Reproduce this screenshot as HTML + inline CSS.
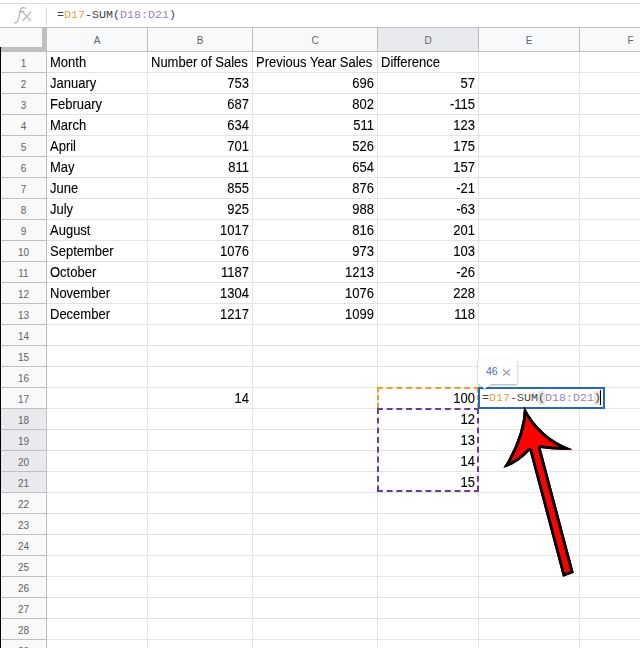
<!DOCTYPE html><html><head><meta charset="utf-8"><style>
*{margin:0;padding:0;box-sizing:border-box}
html,body{width:640px;height:648px;overflow:hidden;background:#fff}
body{position:relative;font-family:"Liberation Sans",sans-serif}
.a{position:absolute}
.hl{position:absolute;height:1px;background:#e2e3e3}
.vl{position:absolute;width:1px;background:#e2e3e3}
.t{position:absolute;font-size:13px;line-height:20px;color:#000;white-space:nowrap;transform:scaleY(1.08);transform-origin:0 14.5px;-webkit-text-stroke:0.1px #000}
.r{text-align:right}
.hd{position:absolute;font-size:10px;line-height:20px;color:#5f6368;text-align:center}
.mono{font-family:"Liberation Mono",monospace}
</style></head><body>

<div class="a" style="left:0;top:3px;width:640px;height:1px;background:#dadce0"></div>
<div class="a" style="left:46px;top:7px;width:1px;height:18px;background:#dadce0"></div>
<svg class="a" style="left:0;top:0" width="46" height="27"><g fill="none" stroke="#acacac" stroke-width="1.05" stroke-linecap="round"><path d="M14.5,22.5 C16.2,23.6 17.6,22.4 18.4,19.2 L20.6,10.4 C21.3,7.6 23.2,7 25.3,8.3"/><path d="M19.3,11.6 L24.2,11.6"/><path d="M22.6,12 L30.6,20.6 M31,11.6 L23,20.6"/></g></svg>
<div class="a mono" style="left:57px;top:7px;font-size:11.67px;line-height:16px;color:#3c4043;white-space:pre">=<span style="color:#e5a048">D17</span>-SUM(<span style="color:#9a84b4">D18:D21</span>)</div>
<div class="a" style="left:0;top:27px;width:640px;height:1px;background:#c0c0c0"></div>
<div class="a" style="left:0;top:28px;width:640px;height:23px;background:#f8f9fa"></div>
<div class="a" style="left:378px;top:28px;width:100px;height:23px;background:#e8eaed"></div>
<div class="a" style="left:0;top:51px;width:640px;height:1px;background:#c0c0c0"></div>
<div class="a" style="left:0;top:52px;width:46px;height:596px;background:#f8f9fa"></div>
<div class="a" style="left:0;top:409px;width:46px;height:83px;background:#e8eaed"></div>
<div class="hl" style="left:47px;top:72px;width:593px"></div>
<div class="a" style="left:0;top:72px;width:46px;height:1px;background:#c0c0c0"></div>
<div class="hl" style="left:47px;top:93px;width:593px"></div>
<div class="a" style="left:0;top:93px;width:46px;height:1px;background:#c0c0c0"></div>
<div class="hl" style="left:47px;top:114px;width:593px"></div>
<div class="a" style="left:0;top:114px;width:46px;height:1px;background:#c0c0c0"></div>
<div class="hl" style="left:47px;top:135px;width:593px"></div>
<div class="a" style="left:0;top:135px;width:46px;height:1px;background:#c0c0c0"></div>
<div class="hl" style="left:47px;top:156px;width:593px"></div>
<div class="a" style="left:0;top:156px;width:46px;height:1px;background:#c0c0c0"></div>
<div class="hl" style="left:47px;top:177px;width:593px"></div>
<div class="a" style="left:0;top:177px;width:46px;height:1px;background:#c0c0c0"></div>
<div class="hl" style="left:47px;top:198px;width:593px"></div>
<div class="a" style="left:0;top:198px;width:46px;height:1px;background:#c0c0c0"></div>
<div class="hl" style="left:47px;top:219px;width:593px"></div>
<div class="a" style="left:0;top:219px;width:46px;height:1px;background:#c0c0c0"></div>
<div class="hl" style="left:47px;top:240px;width:593px"></div>
<div class="a" style="left:0;top:240px;width:46px;height:1px;background:#c0c0c0"></div>
<div class="hl" style="left:47px;top:261px;width:593px"></div>
<div class="a" style="left:0;top:261px;width:46px;height:1px;background:#c0c0c0"></div>
<div class="hl" style="left:47px;top:282px;width:593px"></div>
<div class="a" style="left:0;top:282px;width:46px;height:1px;background:#c0c0c0"></div>
<div class="hl" style="left:47px;top:303px;width:593px"></div>
<div class="a" style="left:0;top:303px;width:46px;height:1px;background:#c0c0c0"></div>
<div class="hl" style="left:47px;top:324px;width:593px"></div>
<div class="a" style="left:0;top:324px;width:46px;height:1px;background:#c0c0c0"></div>
<div class="hl" style="left:47px;top:345px;width:593px"></div>
<div class="a" style="left:0;top:345px;width:46px;height:1px;background:#c0c0c0"></div>
<div class="hl" style="left:47px;top:366px;width:593px"></div>
<div class="a" style="left:0;top:366px;width:46px;height:1px;background:#c0c0c0"></div>
<div class="hl" style="left:47px;top:387px;width:593px"></div>
<div class="a" style="left:0;top:387px;width:46px;height:1px;background:#c0c0c0"></div>
<div class="hl" style="left:47px;top:408px;width:593px"></div>
<div class="a" style="left:0;top:408px;width:46px;height:1px;background:#c0c0c0"></div>
<div class="hl" style="left:47px;top:429px;width:593px"></div>
<div class="a" style="left:0;top:429px;width:46px;height:1px;background:#c0c0c0"></div>
<div class="hl" style="left:47px;top:450px;width:593px"></div>
<div class="a" style="left:0;top:450px;width:46px;height:1px;background:#c0c0c0"></div>
<div class="hl" style="left:47px;top:471px;width:593px"></div>
<div class="a" style="left:0;top:471px;width:46px;height:1px;background:#c0c0c0"></div>
<div class="hl" style="left:47px;top:492px;width:593px"></div>
<div class="a" style="left:0;top:492px;width:46px;height:1px;background:#c0c0c0"></div>
<div class="hl" style="left:47px;top:513px;width:593px"></div>
<div class="a" style="left:0;top:513px;width:46px;height:1px;background:#c0c0c0"></div>
<div class="hl" style="left:47px;top:534px;width:593px"></div>
<div class="a" style="left:0;top:534px;width:46px;height:1px;background:#c0c0c0"></div>
<div class="hl" style="left:47px;top:555px;width:593px"></div>
<div class="a" style="left:0;top:555px;width:46px;height:1px;background:#c0c0c0"></div>
<div class="hl" style="left:47px;top:576px;width:593px"></div>
<div class="a" style="left:0;top:576px;width:46px;height:1px;background:#c0c0c0"></div>
<div class="hl" style="left:47px;top:597px;width:593px"></div>
<div class="a" style="left:0;top:597px;width:46px;height:1px;background:#c0c0c0"></div>
<div class="hl" style="left:47px;top:618px;width:593px"></div>
<div class="a" style="left:0;top:618px;width:46px;height:1px;background:#c0c0c0"></div>
<div class="hl" style="left:47px;top:639px;width:593px"></div>
<div class="a" style="left:0;top:639px;width:46px;height:1px;background:#c0c0c0"></div>
<div class="vl" style="left:147px;top:52px;height:596px"></div>
<div class="a" style="left:147px;top:28px;width:1px;height:23px;background:#c0c0c0"></div>
<div class="vl" style="left:252px;top:52px;height:596px"></div>
<div class="a" style="left:252px;top:28px;width:1px;height:23px;background:#c0c0c0"></div>
<div class="vl" style="left:377px;top:52px;height:596px"></div>
<div class="a" style="left:377px;top:28px;width:1px;height:23px;background:#c0c0c0"></div>
<div class="vl" style="left:478px;top:52px;height:596px"></div>
<div class="a" style="left:478px;top:28px;width:1px;height:23px;background:#c0c0c0"></div>
<div class="vl" style="left:579px;top:52px;height:596px"></div>
<div class="a" style="left:579px;top:28px;width:1px;height:23px;background:#c0c0c0"></div>
<div class="a" style="left:46px;top:28px;width:1px;height:620px;background:#c0c0c0"></div>
<div class="a" style="left:42px;top:28px;width:5px;height:24px;background:#bfbfbf"></div>
<div class="a" style="left:0;top:47px;width:47px;height:5px;background:#bfbfbf"></div>
<div class="a" style="left:0;top:47px;width:1px;height:601px;background:#000"></div>
<div class="hd" style="left:47px;top:31px;width:100px">A</div>
<div class="hd" style="left:148px;top:31px;width:104px">B</div>
<div class="hd" style="left:253px;top:31px;width:124px">C</div>
<div class="hd" style="left:378px;top:31px;width:100px">D</div>
<div class="hd" style="left:479px;top:31px;width:100px">E</div>
<div class="hd" style="left:580px;top:31px;width:101px">F</div>
<div class="hd" style="left:1px;top:54px;width:45px">1</div>
<div class="hd" style="left:1px;top:75px;width:45px">2</div>
<div class="hd" style="left:1px;top:96px;width:45px">3</div>
<div class="hd" style="left:1px;top:117px;width:45px">4</div>
<div class="hd" style="left:1px;top:138px;width:45px">5</div>
<div class="hd" style="left:1px;top:159px;width:45px">6</div>
<div class="hd" style="left:1px;top:180px;width:45px">7</div>
<div class="hd" style="left:1px;top:201px;width:45px">8</div>
<div class="hd" style="left:1px;top:222px;width:45px">9</div>
<div class="hd" style="left:1px;top:243px;width:45px">10</div>
<div class="hd" style="left:1px;top:264px;width:45px">11</div>
<div class="hd" style="left:1px;top:285px;width:45px">12</div>
<div class="hd" style="left:1px;top:306px;width:45px">13</div>
<div class="hd" style="left:1px;top:327px;width:45px">14</div>
<div class="hd" style="left:1px;top:348px;width:45px">15</div>
<div class="hd" style="left:1px;top:369px;width:45px">16</div>
<div class="hd" style="left:1px;top:390px;width:45px">17</div>
<div class="hd" style="left:1px;top:411px;width:45px">18</div>
<div class="hd" style="left:1px;top:432px;width:45px">19</div>
<div class="hd" style="left:1px;top:453px;width:45px">20</div>
<div class="hd" style="left:1px;top:474px;width:45px">21</div>
<div class="hd" style="left:1px;top:495px;width:45px">22</div>
<div class="hd" style="left:1px;top:516px;width:45px">23</div>
<div class="hd" style="left:1px;top:537px;width:45px">24</div>
<div class="hd" style="left:1px;top:558px;width:45px">25</div>
<div class="hd" style="left:1px;top:579px;width:45px">26</div>
<div class="hd" style="left:1px;top:600px;width:45px">27</div>
<div class="hd" style="left:1px;top:621px;width:45px">28</div>
<div class="hd" style="left:1px;top:642px;width:45px">29</div>
<div class="t" style="left:50px;top:53px">Month</div>
<div class="t" style="left:151px;top:53px">Number of Sales</div>
<div class="t" style="left:256px;top:53px">Previous Year Sales</div>
<div class="t" style="left:381px;top:53px">Difference</div>
<div class="t" style="left:50px;top:74px">January</div>
<div class="t r" style="left:147px;top:74px;width:102px">753</div>
<div class="t r" style="left:252px;top:74px;width:122px">696</div>
<div class="t r" style="left:377px;top:74px;width:98px">57</div>
<div class="t" style="left:50px;top:95px">February</div>
<div class="t r" style="left:147px;top:95px;width:102px">687</div>
<div class="t r" style="left:252px;top:95px;width:122px">802</div>
<div class="t r" style="left:377px;top:95px;width:98px">-115</div>
<div class="t" style="left:50px;top:116px">March</div>
<div class="t r" style="left:147px;top:116px;width:102px">634</div>
<div class="t r" style="left:252px;top:116px;width:122px">511</div>
<div class="t r" style="left:377px;top:116px;width:98px">123</div>
<div class="t" style="left:50px;top:137px">April</div>
<div class="t r" style="left:147px;top:137px;width:102px">701</div>
<div class="t r" style="left:252px;top:137px;width:122px">526</div>
<div class="t r" style="left:377px;top:137px;width:98px">175</div>
<div class="t" style="left:50px;top:158px">May</div>
<div class="t r" style="left:147px;top:158px;width:102px">811</div>
<div class="t r" style="left:252px;top:158px;width:122px">654</div>
<div class="t r" style="left:377px;top:158px;width:98px">157</div>
<div class="t" style="left:50px;top:179px">June</div>
<div class="t r" style="left:147px;top:179px;width:102px">855</div>
<div class="t r" style="left:252px;top:179px;width:122px">876</div>
<div class="t r" style="left:377px;top:179px;width:98px">-21</div>
<div class="t" style="left:50px;top:200px">July</div>
<div class="t r" style="left:147px;top:200px;width:102px">925</div>
<div class="t r" style="left:252px;top:200px;width:122px">988</div>
<div class="t r" style="left:377px;top:200px;width:98px">-63</div>
<div class="t" style="left:50px;top:221px">August</div>
<div class="t r" style="left:147px;top:221px;width:102px">1017</div>
<div class="t r" style="left:252px;top:221px;width:122px">816</div>
<div class="t r" style="left:377px;top:221px;width:98px">201</div>
<div class="t" style="left:50px;top:242px">September</div>
<div class="t r" style="left:147px;top:242px;width:102px">1076</div>
<div class="t r" style="left:252px;top:242px;width:122px">973</div>
<div class="t r" style="left:377px;top:242px;width:98px">103</div>
<div class="t" style="left:50px;top:263px">October</div>
<div class="t r" style="left:147px;top:263px;width:102px">1187</div>
<div class="t r" style="left:252px;top:263px;width:122px">1213</div>
<div class="t r" style="left:377px;top:263px;width:98px">-26</div>
<div class="t" style="left:50px;top:284px">November</div>
<div class="t r" style="left:147px;top:284px;width:102px">1304</div>
<div class="t r" style="left:252px;top:284px;width:122px">1076</div>
<div class="t r" style="left:377px;top:284px;width:98px">228</div>
<div class="t" style="left:50px;top:305px">December</div>
<div class="t r" style="left:147px;top:305px;width:102px">1217</div>
<div class="t r" style="left:252px;top:305px;width:122px">1099</div>
<div class="t r" style="left:377px;top:305px;width:98px">118</div>
<div class="t r" style="left:147px;top:389px;width:102px">14</div>
<div class="t r" style="left:377px;top:389px;width:98px">100</div>
<div class="t r" style="left:377px;top:410px;width:98px">12</div>
<div class="t r" style="left:377px;top:431px;width:98px">13</div>
<div class="t r" style="left:377px;top:452px;width:98px">14</div>
<div class="t r" style="left:377px;top:473px;width:98px">15</div>
<svg class="a" style="left:0;top:0" width="640" height="648"><g fill="none" stroke-width="2" stroke-dasharray="5.9 3.8">
<path stroke="#ee9d2f" d="M377,388 H479"/><path stroke="#ee9d2f" stroke-dasharray="5.4 2.5" d="M378,387 V409 M478,387 V409"/>
<path stroke="#6d3b92" d="M377,409 H479 M378,408 V492 M478,408 V492 M377,491 H479"/>
</g></svg>
<div class="a" style="left:478px;top:387px;width:127px;height:22px;border:2px solid #2565c6;background:#fff"></div>
<div class="a mono" style="left:482px;top:390px;font-size:11.67px;line-height:16px;color:#444;white-space:pre">=<span style="color:#e5a048">D17</span>-SUM<span style="background:#e6e6e6">(</span><span style="color:#9a84b4">D18:D21</span><span style="background:#e6e6e6">)</span></div>
<div class="a" style="left:600px;top:390px;width:1px;height:15px;background:#000"></div>
<svg class="a" style="left:0;top:0" width="640" height="648"><defs><filter id="sh" x="-20%" y="-20%" width="140%" height="160%"><feGaussianBlur in="SourceAlpha" stdDeviation="0.8"/><feOffset dy="0.6"/><feComponentTransfer><feFuncA type="linear" slope="0.35"/></feComponentTransfer><feMerge><feMergeNode/><feMergeNode in="SourceGraphic"/></feMerge></filter></defs><path d="M478,359 H517 V384 H491 L484.5,389 L479.5,384 H478 Z" fill="#fff" filter="url(#sh)"/></svg>
<div class="a" style="left:486px;top:363px;font-size:10.5px;line-height:16px;color:#4a6bb0">46</div>
<svg class="a" style="left:0;top:0" width="640" height="648"><path d="M503,369.5 L510,375.5 M510,369.5 L503,375.5" stroke="#9a9a9a" stroke-width="1.1" fill="none"/></svg>
<svg class="a" style="left:0;top:0" width="640" height="648">
<defs><clipPath id="ac"><path d="M524.2,406.5 Q539.7,437.8 572.5,449.5 Q556,450.5 540.6,448.1 L573.7,572.8 L563,576.7 L529.6,450.8 Q516.5,464.5 503.5,467.8 Q523.2,436.9 524.2,406.5 Z"/></clipPath></defs>
<path d="M524.2,406.5 Q539.7,437.8 572.5,449.5 Q556,450.5 540.6,448.1 L573.7,572.8 L563,576.7 L529.6,450.8 Q516.5,464.5 503.5,467.8 Q523.2,436.9 524.2,406.5 Z" fill="#000"/>
<path d="M524.2,406.5 Q539.7,437.8 572.5,449.5 Q556,450.5 540.6,448.1 L573.7,572.8 L563,576.7 L529.6,450.8 Q516.5,464.5 503.5,467.8 Q523.2,436.9 524.2,406.5 Z" fill="#fc0303" stroke="#000" stroke-width="5.6" clip-path="url(#ac)" stroke-linejoin="round"/>
</svg>
</body></html>
